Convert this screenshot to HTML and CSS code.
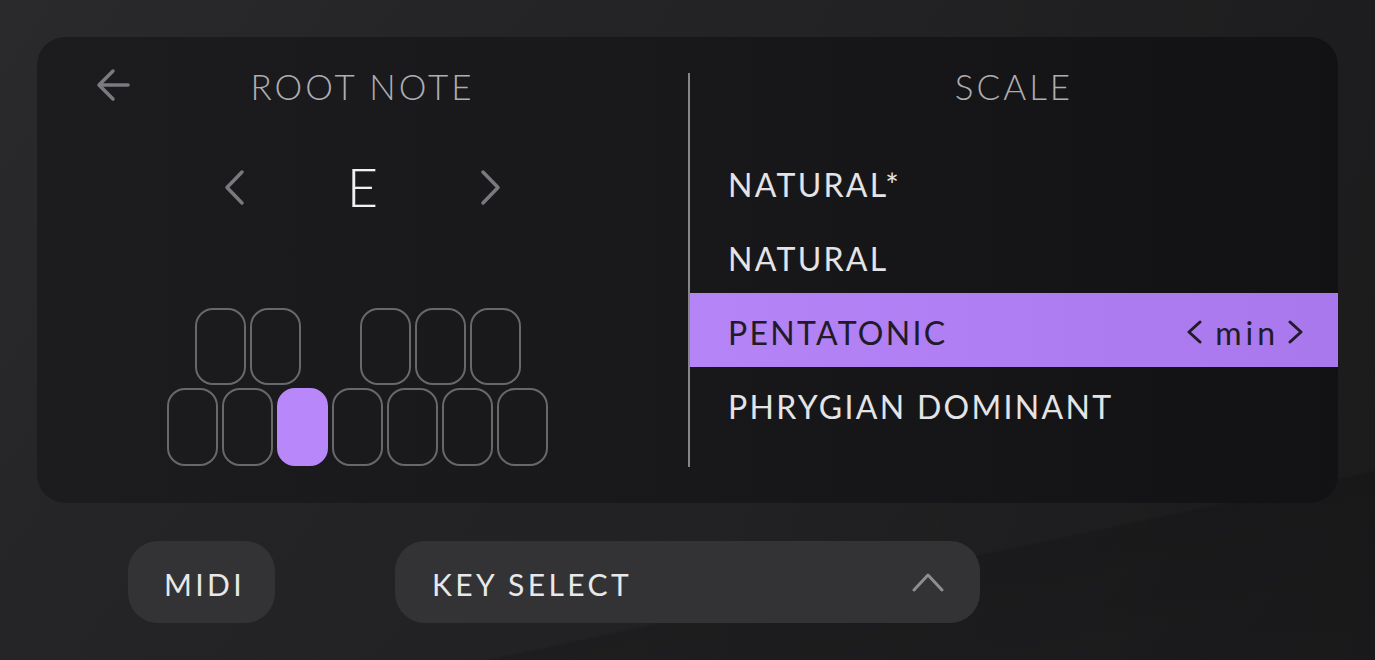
FILE: index.html
```html
<!DOCTYPE html>
<html lang="en">
  <head>
    <meta charset="UTF-8">
    <meta name="viewport" content="width=device-width, initial-scale=1.0">
    <title>Key Select</title>
    <link rel="stylesheet" href="styles.css">
  </head>
  <body>

    <main class="screen">
      <section class="panel">

        <div class="root">
          <header class="root-head">
            <button class="back" type="button" aria-label="Back">
              <svg width="34" height="34" viewBox="0 0 34 34">
                <path d="M32 17 H3 M17 3 L3 17 L17 31" />
              </svg>
            </button>
            <h2 class="title">ROOT NOTE</h2>
          </header>

          <div class="note-picker">
            <svg class="step" width="22" height="37" viewBox="0 0 22 37">
              <path d="M19 3 L4 18.5 L19 34" />
            </svg>
            <span class="note">E</span>
            <svg class="step" width="22" height="37" viewBox="0 0 22 37">
              <path d="M3 3 L18 18.5 L3 34" />
            </svg>
          </div>

          <div class="keys">
            <div class="keys-row keys-black">
              <span class="key"></span>
              <span class="key"></span>
              <span class="key-gap"></span>
              <span class="key"></span>
              <span class="key"></span>
              <span class="key"></span>
            </div>
            <div class="keys-row keys-white">
              <span class="key"></span>
              <span class="key"></span>
              <span class="key active"></span>
              <span class="key"></span>
              <span class="key"></span>
              <span class="key"></span>
              <span class="key"></span>
            </div>
          </div>
        </div>

        <div class="divider"></div>

        <div class="scale">
          <h2 class="title">SCALE</h2>
          <ul class="scale-list">
            <li>NATURAL*</li>
            <li>NATURAL</li>
            <li class="selected">
              <span>PENTATONIC</span>
              <span class="mode">
                <svg width="16" height="24" viewBox="0 0 16 24"><path d="M14 2 L3 12 L14 22" /></svg>
                <span>min</span>
                <svg width="16" height="24" viewBox="0 0 16 24"><path d="M2 2 L13 12 L2 22" /></svg>
              </span>
            </li>
            <li>PHRYGIAN DOMINANT</li>
          </ul>
        </div>

      </section>

      <footer class="controls">
        <button class="pill midi" type="button">MIDI</button>
        <button class="pill key-select" type="button">
          <span>KEY SELECT</span>
          <svg width="32" height="20" viewBox="0 0 32 20">
            <path d="M2 18 L16 3 L30 18" />
          </svg>
        </button>
      </footer>
    </main>

  </body>
</html>
```

FILE: styles.css
```css
/* Base */
html, body {
  margin: 0;
  padding: 0;
}

body {
  width: 1375px;
  height: 660px;
  overflow: hidden;
  font-family: 'Lato', 'Open Sans', sans-serif;
  color: #e6e6e8;
  background-color: #202022;
  background-image:
    linear-gradient(168deg, transparent 0%, transparent 80%, rgba(0, 0, 0, 0.14) 80.3%, rgba(0, 0, 0, 0.04) 100%),
    linear-gradient(100deg, rgba(0, 0, 0, 0) 50%, rgba(0, 0, 0, 0.12) 100%),
    linear-gradient(125deg, #2a2a2c 0%, #242426 30%, #212123 65%, #1e1e20 100%);
}

button {
  font: inherit;
  color: inherit;
  border: none;
  background: none;
  padding: 0;
  cursor: pointer;
}

svg path {
  fill: none;
  stroke-linecap: round;
  stroke-linejoin: round;
}

.screen {
  padding: 37px 37px 0 37px;
}

/* Panel */
.panel {
  display: grid;
  grid-template-columns: 651px 2px 1fr;
  height: 466px;
  border-radius: 28px;
  background: linear-gradient(90deg, #1c1c1e 0%, #18181a 50%, #121214 100%);
  overflow: hidden;
}

.title {
  margin: -2px 0 2px 0;
  height: 30px;
  line-height: 30px;
  font-size: 35px;
  font-weight: 300;
  letter-spacing: 3px;
  color: #aeadb3;
  text-align: center;
}

.divider {
  margin: 36px 0;
  background-color: #86858a;
}

/* Root note column */
.root {
  padding: 36px 61px 0 61px;
}

.root-head {
  display: grid;
  grid-template-columns: 1fr auto 1fr;
  align-items: center;
}

.back {
  justify-self: start;
  display: flex;
  margin: -6px 0 0 -2px;
}

.back path {
  stroke: #7b7a81;
  stroke-width: 3.5;
}

.note-picker {
  display: flex;
  align-items: center;
  justify-content: space-between;
  width: 280px;
  height: 50px;
  margin: 59px auto 0 auto;
}

.step path {
  stroke: #7a7980;
  stroke-width: 3.5;
}

.note {
  font-size: 54px;
  font-weight: 300;
  line-height: 50px;
  color: #f0f0f2;
}

.keys {
  display: flex;
  flex-direction: column;
  gap: 3px;
  margin: 96px 0 0 69px;
}

.keys-row {
  display: flex;
  gap: 4px;
}

.keys-black {
  padding-left: 28px;
}

.key,
.key-gap {
  width: 51px;
  height: 77px;
  box-sizing: border-box;
}

.key {
  border: 2px solid #68686c;
  border-radius: 18px;
}

.keys-white .key {
  height: 78px;
}

.key.active {
  border-color: #b887f9;
  background-color: #b887f9;
}

/* Scale column */
.scale {
  padding-top: 36px;
}

.scale-list {
  list-style: none;
  margin: 44px 0 0 0;
  padding: 0;
}

.scale-list li {
  display: flex;
  align-items: center;
  justify-content: space-between;
  height: 74px;
  padding: 4px 34px 0 38px;
  box-sizing: border-box;
  font-size: 32px;
  font-weight: 400;
  letter-spacing: 2.3px;
  color: #e4e4e6;
}

.scale-list li.selected {
  background: linear-gradient(90deg, #b585f7 0%, #ad7cf1 60%, #a878ec 100%);
  color: #201b27;
}

.mode {
  display: flex;
  align-items: center;
  gap: 13px;
  letter-spacing: 4px;
}

.mode span {
  margin-right: -4px;
}

.mode path {
  stroke: #201b27;
  stroke-width: 3;
}

/* Bottom controls */
.controls {
  display: flex;
  gap: 120px;
  padding: 38px 0 0 91px;
}

.pill {
  display: flex;
  align-items: center;
  box-sizing: border-box;
  height: 82px;
  padding: 4px 36px 0 36px;
  border-radius: 30px;
  background-color: #333335;
  font-size: 30px;
  font-weight: 400;
  letter-spacing: 3.4px;
  color: #e8e8ea;
}

.midi {
  width: 147px;
}

.key-select {
  justify-content: space-between;
  width: 585px;
  padding: 4px 36px 0 37px;
}

.key-select svg {
  margin-top: -4px;
}

.key-select path {
  stroke: #8e8d92;
  stroke-width: 3;
}
```
